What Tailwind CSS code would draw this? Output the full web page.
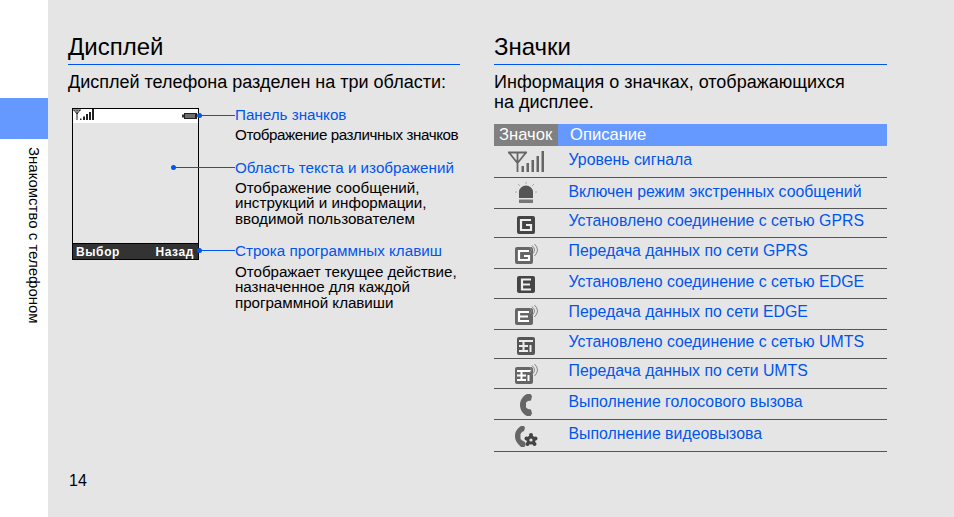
<!DOCTYPE html>
<html lang="ru">
<head>
  <meta charset="UTF-8">
  <title>Дисплей</title>
  <script src="https://cdn.jsdelivr.net/npm/@tailwindcss/browser@4"></script>
</head>
<body class="bg-white overflow-hidden">
<div class="flex w-[954px] h-[517px] font-['Liberation_Sans',Arial,sans-serif] text-black">

  <!-- side tab -->
  <aside class="w-[48px] shrink-0 bg-white pt-[98px]">
    <div class="h-[41px] bg-[#6699ff]"></div>
    <div class="pt-[8px] pl-[27px] text-[15px] leading-[14px] whitespace-nowrap [writing-mode:vertical-rl]">Знакомство с телефоном</div>
  </aside>

  <main class="relative flex-1 bg-[#e5e5e5] pl-[20px] pt-[33px]">
    <div class="flex gap-[34px]">

      <!-- left column -->
      <section class="w-[392px]">
        <h1 class="h-[32px] text-[24px] leading-[28px] border-b border-[#0055ee]">Дисплей</h1>
        <p class="mt-[7px] text-[18px] leading-[20px]">Дисплей телефона разделен на три области:</p>

        <div class="flex mt-[15px]">
          <!-- phone -->
          <div class="relative ml-[4px] mt-[1px] w-[127px] h-[152px] border border-black bg-[#e5e5e5] flex flex-col">
            <div class="h-[14px] bg-white flex items-start justify-between">
              <svg width="21" height="12" viewBox="0 0 21 12">
                <path d="M0 1h8M1 1l3 4M7 1L4 5M4 1v10" stroke="#222" fill="none"/>
                <path d="M7 9.500h1.500V11H7zM10 7.500h2V11h-2zM13 5h2v6h-2zM16 3h2v8h-2zM19 0h2v11h-2z" fill="#222"/>
              </svg>
              <svg width="15" height="6" viewBox="0 0 15 6" class="mt-[4px] mr-[1px]">
                <path d="M0 1.500h2v3H0z" fill="#333"/><path d="M2 0h13v6H2z" fill="#222"/>
                <path d="M4 1v4M6 1v4M8 1v4M10 1v4M12 1v4" stroke="#bbb"/>
              </svg>
            </div>
            <div class="flex-1"></div>
            <div class="h-[16px] bg-[#333333] border-t border-black flex items-center justify-between pl-[3px] pr-[4px] text-white text-[12px] leading-[14px] font-bold tracking-[0.6px]">
              <span>Выбор</span><span>Назад</span>
            </div>
            <!-- leader dots -->
            <span class="absolute left-[124px] top-[4px] w-[5px] h-[5px] rounded-full bg-[#0055ee]"></span>
            <span class="absolute left-[127px] top-[6px] w-[35px] h-px bg-[#0055ee]"></span>
            <span class="absolute left-[98px] top-[56px] w-[5px] h-[5px] rounded-full bg-[#0055ee]"></span>
            <span class="absolute left-[101px] top-[58px] w-[61px] h-px bg-[#0055ee]"></span>
            <span class="absolute left-[124px] top-[139px] w-[5px] h-[5px] rounded-full bg-[#0055ee]"></span>
            <span class="absolute left-[127px] top-[141px] w-[35px] h-px bg-[#0055ee]"></span>
          </div>

          <!-- captions -->
          <div class="ml-[36px] text-[15.2px] leading-[15.5px]">
            <p class="text-[#0055ee] leading-[16px]">Панель значков</p>
            <p class="mt-[4px] tracking-[-0.42px] whitespace-nowrap">Отображение различных значков</p>
            <p class="mt-[17px] text-[#0055ee] leading-[16px]">Область текста и изображений</p>
            <p class="mt-[4px]">Отображение сообщений,<br>инструкций и информации,<br>вводимой пользователем</p>
            <p class="mt-[16.5px] text-[#0055ee] leading-[16px]">Строка программных клавиш</p>
            <p class="mt-[5px] tracking-[-0.05px]">Отображает текущее действие,<br>назначенное для каждой<br>программной клавиши</p>
          </div>
        </div>
      </section>

      <!-- right column -->
      <section class="w-[393px]">
        <h1 class="h-[32px] text-[24px] leading-[28px] border-b border-[#0055ee]">Значки</h1>
        <p class="mt-[7px] text-[18px] leading-[20px]">Информация о значках, отображающихся<br>на дисплее.</p>

        <div class="mt-[12px] flex h-[22px] text-white text-[16.6px] leading-[21px]">
          <div class="w-[64px] bg-[#808080] pl-[5px]">Значок</div>
          <div class="flex-1 bg-[#6699ff] pl-[12px]">Описание</div>
        </div>

        <div class="text-[#0055ee] text-[15.85px] leading-[20px]">
          <div class="flex h-[32px] border-b border-[#555]">
            <div class="w-[64px] flex justify-center pt-[5px]">
              <svg width="37" height="22" viewBox="0 0 37 22"><path d="M0 1.500h19M1 1.500l8 10M18 1.500l-8 10M9.500 1.500V21" stroke="#666" stroke-width="1.800" fill="none"/><path d="M13.500 15H16v6h-2.500zM18.500 12H21v9h-2.500zM23.500 9H26v12h-2.500zM28.500 5H31v16h-2.500zM33.500 0H36v21h-2.500z" fill="#666"/></svg>
            </div>
            <div class="pl-[10.5px] pt-[4px]">Уровень сигнала</div>
          </div>
          <div class="flex h-[31px] border-b border-[#555]">
            <div class="w-[64px] flex justify-center pt-[4px]">
              <svg width="22" height="22" viewBox="0 0 22 22"><path d="M4 16V10a7 6.500 0 0 1 14 0v6z" fill="#555"/><path d="M4 17.500h14V21H4z" fill="#777"/><path d="M3 2l2 2M19 2l-2 2M11 0v2M0 10h2M20 10h2" stroke="#aaa"/></svg>
            </div>
            <div class="pl-[10.5px] pt-[4px]">Включен режим экстренных сообщений</div>
          </div>
          <div class="flex h-[29px] border-b border-[#555]">
            <div class="w-[64px] flex justify-center pt-[7px]">
              <svg width="18" height="18" viewBox="0 0 18 18"><rect width="18" height="18" rx="2" fill="#444"/><path d="M14 4H4v10h10V9H9" stroke="#eee" stroke-width="2.200" fill="none"/></svg>
            </div>
            <div class="pl-[10.5px] pt-[2px]">Установлено соединение с сетью GPRS</div>
          </div>
          <div class="flex h-[31px] border-b border-[#555]">
            <div class="w-[64px] flex justify-center pt-[6px] pl-[1px]">
              <svg width="23" height="20" viewBox="0 0 23 20"><rect y="3" width="18" height="17" rx="2" fill="#666"/><path d="M14 7H4v9h10v-4H9" stroke="#fff" stroke-width="2.200" fill="none"/><path d="M15 3q3 3 0 6M17 1.500q5 4.500 0 9M19.500 0q6 6 0 12" stroke="#888" fill="none"/></svg>
            </div>
            <div class="pl-[10.5px] pt-[3px]">Передача данных по сети GPRS</div>
          </div>
          <div class="flex h-[30px] border-b border-[#555]">
            <div class="w-[64px] flex justify-center pt-[7px]">
              <svg width="18" height="17" viewBox="0 0 18 17"><rect width="18" height="17" rx="2" fill="#444"/><path d="M14 3.500H5v10h9M5 8.500h8" stroke="#eee" stroke-width="2.200" fill="none"/></svg>
            </div>
            <div class="pl-[10.5px] pt-[3px]">Установлено соединение с сетью EDGE</div>
          </div>
          <div class="flex h-[31px] border-b border-[#555]">
            <div class="w-[64px] flex justify-center pt-[6px] pl-[1px]">
              <svg width="23" height="20" viewBox="0 0 23 20"><rect y="3" width="18" height="17" rx="2" fill="#666"/><path d="M14 7H4v9h10M4 11.500h9" stroke="#fff" stroke-width="2.200" fill="none"/><path d="M15 3q3 3 0 6M17 1.500q5 4.500 0 9M19.500 0q6 6 0 12" stroke="#888" fill="none"/></svg>
            </div>
            <div class="pl-[10.5px] pt-[3px]">Передача данных по сети EDGE</div>
          </div>
          <div class="flex h-[29px] border-b border-[#555]">
            <div class="w-[64px] flex justify-center pt-[7px]">
              <svg width="18" height="18" viewBox="0 0 18 18"><rect width="18" height="18" rx="2" fill="#555"/><path d="M2 4h14M2 9h9M6.500 4v10M2 14h9M13.500 8v7" stroke="#eee" stroke-width="2" fill="none"/></svg>
            </div>
            <div class="pl-[10.5px] pt-[2px]">Установлено соединение с сетью UMTS</div>
          </div>
          <div class="flex h-[30px] border-b border-[#555]">
            <div class="w-[64px] flex justify-center pt-[5px] pl-[1px]">
              <svg width="23" height="20" viewBox="0 0 23 20"><rect y="3" width="18" height="17" rx="2" fill="#666"/><path d="M2 7h14M2 11.500h9M6.500 7v9M2 16h9M13.500 11v6" stroke="#fff" stroke-width="2" fill="none"/><path d="M15 3q3 3 0 6M17 1.500q5 4.500 0 9M19.500 0q6 6 0 12" stroke="#888" fill="none"/></svg>
            </div>
            <div class="pl-[10.5px] pt-[2px]">Передача данных по сети UMTS</div>
          </div>
          <div class="flex h-[31px] border-b border-[#555]">
            <div class="w-[64px] flex justify-center pt-[5px]">
              <svg width="12" height="22" viewBox="0 0 12 22"><path d="M7 0h3.500L12 2l-1 4.500-3 .5-2 1.500v5l2 1.500 3 .5 1 4-1.500 2.500H7C3 20 0 16 0 11S3 2 7 0z" fill="#666"/></svg>
            </div>
            <div class="pl-[10.5px] pt-[3px]">Выполнение голосового вызова</div>
          </div>
          <div class="flex h-[32px] border-b border-[#555]">
            <div class="w-[64px] flex justify-center pt-[6px]">
              <svg width="23" height="21" viewBox="0 0 23 21"><path d="M6 0h3l1 2-1 3-2 1-1.500 2v5L8 15l2 1 .5 3-1 2H6C3 18 0 15 0 10S3 2 6 0z" fill="#666"/><circle cx="16" cy="9" r="2" fill="#444"/><circle cx="11.500" cy="12.500" r="2" fill="#444"/><circle cx="20.500" cy="12.500" r="2" fill="#444"/><circle cx="12.500" cy="18" r="2" fill="#444"/><circle cx="19.500" cy="18" r="2" fill="#444"/><circle cx="16" cy="14" r="4.500" fill="#444"/><circle cx="16" cy="14" r="1.600" fill="#e5e5e5"/></svg>
            </div>
            <div class="pl-[10.5px] pt-[4px]">Выполнение видеовызова</div>
          </div>
        </div>
      </section>
    </div>

    <div class="absolute left-[21px] top-[472px] text-[16px] leading-[18px]">14</div>
  </main>
</div>
</body>
</html>
